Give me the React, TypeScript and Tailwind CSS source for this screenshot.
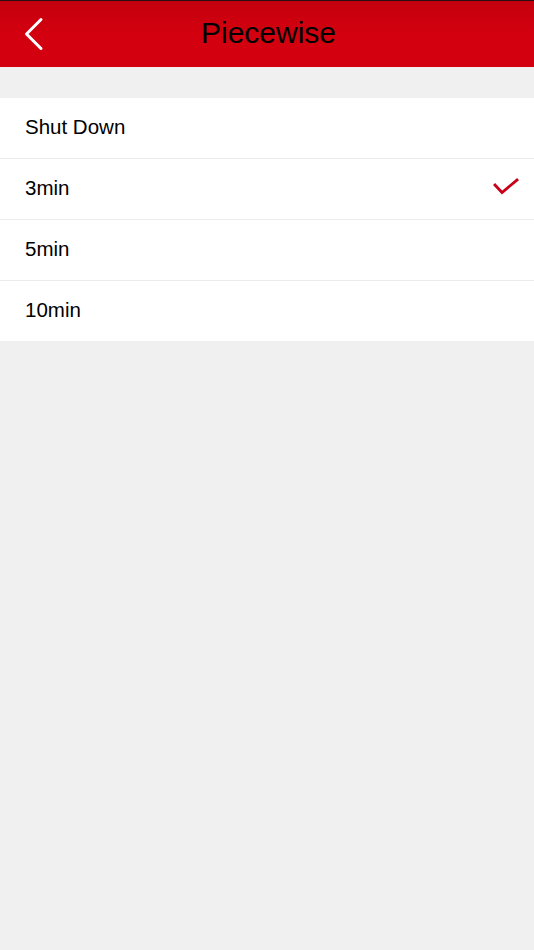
const OPCIONES = ["Shut Down", "3min", "5min", "10min"];

export default function App() {
  const elegido = "3min";

  return (
    <div
      className="flex min-h-[950px] flex-col bg-[#f0f0f0]"
      style={{ fontFamily: '"Liberation Sans", Arial, sans-serif' }}
    >
      <header className="relative flex h-[67px] items-center justify-center border-t border-[#2a0d12] bg-gradient-to-b from-[#c4000e] via-[#d3000f] to-[#d3000f]">
        <button className="absolute left-[22px] top-[15px] h-[36px] w-[24px]" aria-label="back">
          <svg viewBox="0 0 24 36" className="h-full w-full" fill="none">
            <path
              d="M19 3.5 L4.5 18 L19 32.5"
              stroke="white"
              strokeWidth="3"
              strokeLinecap="round"
              strokeLinejoin="round"
            />
          </svg>
        </button>
        <h1 className="ml-[3px] pb-[3px] text-[30px] leading-none text-black">Piecewise</h1>
      </header>

      <ul className="mt-[31px] bg-white">
        {OPCIONES.map((o, i) => (
          <li
            key={o}
            className={`flex items-center justify-between pb-[2px] pl-[25px] pr-[15px] ${
              i > 0 ? "h-[61px] border-t border-[#ececec]" : "h-[60px]"
            }`}
          >
            <span className="text-[20.5px] text-black">{o}</span>
            {o === elegido && (
              <svg viewBox="0 0 26 20" className="h-[20px] w-[26px]" fill="none">
                <path
                  d="M2 7 L9 14.5 L24 2"
                  stroke="#c9001a"
                  strokeWidth="2.8"
                  strokeLinecap="square"
                />
              </svg>
            )}
          </li>
        ))}
      </ul>
    </div>
  );
}
